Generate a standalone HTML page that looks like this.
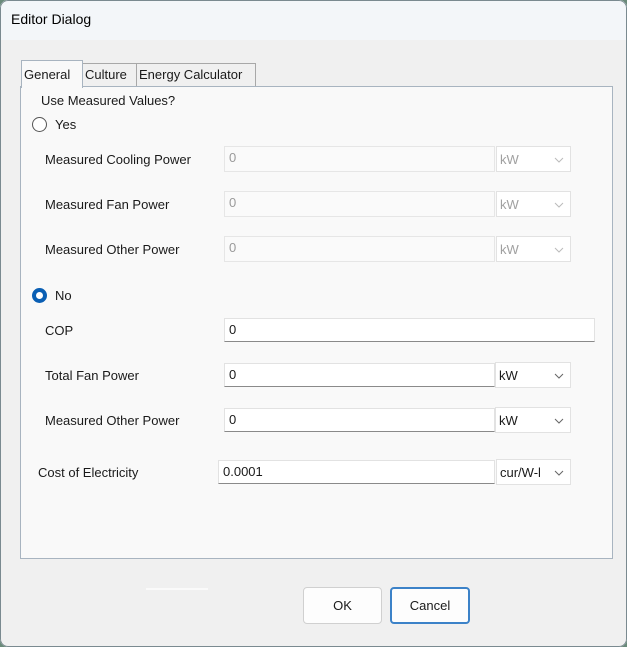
<!DOCTYPE html>
<html><head><style>
*{box-sizing:border-box;margin:0;padding:0}
body{width:627px;height:647px;overflow:hidden;background:#6a8a7a;font-family:"Liberation Sans",sans-serif;font-size:13px;color:#1a1a1a}
.win{position:absolute;left:0;top:0;width:627px;height:647px;background:#f0f0f0;border-radius:8px;overflow:hidden}
.frame{position:absolute;left:0;top:0;width:627px;height:647px;border:1px solid #7a8a90;border-radius:8px;pointer-events:none}
.title{position:absolute;left:0;top:0;width:100%;height:40px;background:#f3f6f9}
.title span{position:absolute;left:11px;top:11px;font-size:14px;color:#000}
.a{position:absolute}
.panel{left:20px;top:86px;width:593px;height:473px;background:#f9f9f9;border:1px solid #a8b4c0}
.tab{position:absolute;border:1px solid #a8a8a8;border-bottom:none;background:#f0f0f0;font-size:13px;padding:3px 0 0 2px}
.inp{position:absolute;background:#fff;border:1px solid #e2e2e2;border-bottom:1px solid #8a8a8a;padding:3px 0 0 4px;font-size:13px}
.dis{background:#fafafa;border:1px solid #e6e6e6;color:#9a9a9a}
.cb{position:absolute;background:#fff;border:1px solid #e2e2e2;padding:5px 0 0 3px;font-size:13px}
.cb.dis{color:#a0a0a0}
.cb svg{position:absolute;right:6px;top:10px}
.lbl{position:absolute;font-size:13px}
.btn{position:absolute;background:#fdfdfd;border:1px solid #d0d0d0;border-radius:4px;text-align:center;padding-top:10px;font-size:13px}
</style></head><body>
<div class="win">
<div class="title"><span>Editor Dialog</span></div>
<div class="a panel"></div>
<div class="tab" style="left:82px;top:63px;width:55px;height:23px">Culture</div>
<div class="tab" style="left:136px;top:63px;width:120px;height:23px">Energy Calculator</div>
<div class="tab" style="left:21px;top:60px;width:62px;height:28px;background:#f9f9f9;border-color:#a8b4c0;padding-top:6px">General</div>

<div class="lbl" style="left:41px;top:93px">Use Measured Values?</div>
<div class="a" style="left:32px;top:117px;width:15px;height:15px;border:1px solid #555;border-radius:50%;background:#fff"></div>
<div class="lbl" style="left:55px;top:117px">Yes</div>

<div class="lbl" style="left:45px;top:152px">Measured Cooling Power</div>
<div class="inp dis" style="left:224px;top:146px;width:271px;height:26px">0</div>
<div class="cb dis" style="left:496px;top:146px;width:75px;height:26px">kW<svg width="10" height="6"><path d="M1 1l4 4 4-4" stroke="#bbb" fill="none"/></svg></div>

<div class="lbl" style="left:45px;top:197px">Measured Fan Power</div>
<div class="inp dis" style="left:224px;top:191px;width:271px;height:26px">0</div>
<div class="cb dis" style="left:496px;top:191px;width:75px;height:26px">kW<svg width="10" height="6"><path d="M1 1l4 4 4-4" stroke="#bbb" fill="none"/></svg></div>

<div class="lbl" style="left:45px;top:242px">Measured Other Power</div>
<div class="inp dis" style="left:224px;top:236px;width:271px;height:26px">0</div>
<div class="cb dis" style="left:496px;top:236px;width:75px;height:26px">kW<svg width="10" height="6"><path d="M1 1l4 4 4-4" stroke="#bbb" fill="none"/></svg></div>

<div class="a" style="left:32px;top:288px;width:15px;height:15px;border-radius:50%;background:#0a5fb4"><div class="a" style="left:4px;top:4px;width:7px;height:7px;border-radius:50%;background:#fff"></div></div>
<div class="lbl" style="left:55px;top:288px">No</div>

<div class="lbl" style="left:45px;top:323px">COP</div>
<div class="inp" style="left:224px;top:318px;width:371px;height:24px">0</div>

<div class="lbl" style="left:45px;top:368px">Total Fan Power</div>
<div class="inp" style="left:224px;top:363px;width:271px;height:24px">0</div>
<div class="cb" style="left:495px;top:362px;width:76px;height:26px">kW<svg width="10" height="6"><path d="M1 1l4 4 4-4" stroke="#666" fill="none"/></svg></div>

<div class="lbl" style="left:45px;top:413px">Measured Other Power</div>
<div class="inp" style="left:224px;top:408px;width:271px;height:24px">0</div>
<div class="cb" style="left:495px;top:407px;width:76px;height:26px">kW<svg width="10" height="6"><path d="M1 1l4 4 4-4" stroke="#666" fill="none"/></svg></div>

<div class="lbl" style="left:38px;top:465px">Cost of Electricity</div>
<div class="inp" style="left:218px;top:460px;width:277px;height:24px">0.0001</div>
<div class="cb" style="left:496px;top:459px;width:75px;height:26px;overflow:hidden">cur/W-l<svg width="10" height="6" style="background:#fff;outline:4px solid #fff"><path d="M1 1l4 4 4-4" stroke="#666" fill="none"/></svg></div>

<div class="a" style="left:146px;top:588px;width:62px;height:2px;background:#fafafa"></div>
<div class="btn" style="left:303px;top:587px;width:79px;height:37px">OK</div>
<div class="btn" style="left:390px;top:587px;width:80px;height:37px;border:2px solid #3c82c8;padding-top:9px">Cancel</div>
<div class="frame"></div>
</div>
</body></html>
